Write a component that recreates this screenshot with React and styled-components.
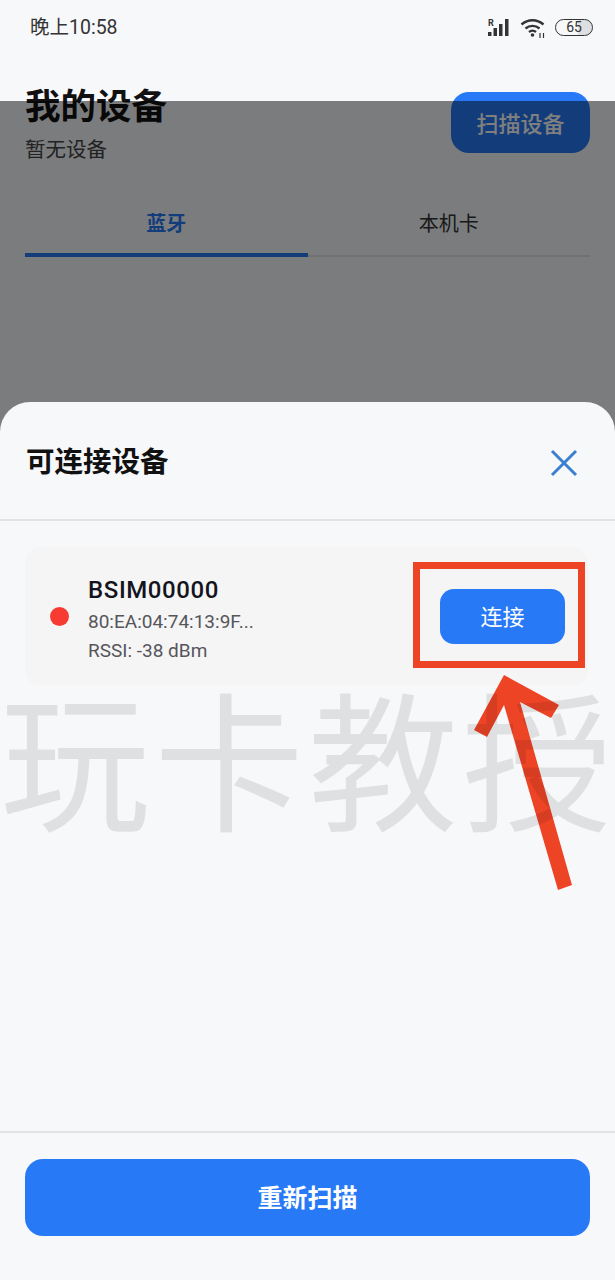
import React from "react";
import styled, { createGlobalStyle } from "styled-components";

const GlobalStyle = createGlobalStyle`
  html, body {
    margin: 0;
    padding: 0;
    background: #f7f8fa;
    font-family: Roboto, "Noto Sans CJK SC", sans-serif;
  }
  * { box-sizing: border-box; }
`;

const Page = styled.div`
  position: relative;
  width: 615px;
  height: 1280px;
  overflow: hidden;
  background: #f7f8fa;
`;

const StatusBar = styled.div`
  display: flex;
  align-items: center;
  justify-content: space-between;
  height: 55px;
  padding: 0 22px 0 30px;
`;

const Time = styled.span`
  margin-bottom: 4px;
  font-size: 19.5px;
  color: #333;
`;

const StatusIcons = styled.div`
  display: flex;
  align-items: center;
  gap: 8px;
`;

const Battery = styled.div`
  width: 38px;
  height: 17px;
  border: 1.5px solid #333;
  border-radius: 9px;
  font-size: 14px;
  line-height: 14px;
  text-align: center;
  color: #333;
  background: linear-gradient(90deg, #f7f8fa 62%, #dedfe1 62%);
`;

const Header = styled.div`
  display: flex;
  align-items: flex-start;
  justify-content: space-between;
  padding: 27px 25px 0;
`;

const HeaderText = styled.div`
  display: flex;
  flex-direction: column;
`;

const PageTitle = styled.h1`
  margin: 0;
  font-size: 35.5px;
  line-height: 50px;
  font-weight: 700;
  color: #111;
`;

const Subtitle = styled.div`
  padding-top: 1px;
  font-size: 20.5px;
  line-height: 35px;
  color: #444;
`;

const ScanButton = styled.button`
  width: 139px;
  height: 61px;
  margin-top: 10px;
  padding: 0 0 2px;
  border: none;
  border-radius: 18px;
  background: #2779f6;
  color: #fff;
  font: 500 22px "Noto Sans CJK SC", sans-serif;
`;

const Tabs = styled.div`
  display: flex;
  margin: 30px 25px 0;
  border-bottom: 2px solid #e2e3e5;
`;

const Tab = styled.div`
  flex: 1;
  height: 59px;
  padding-top: 11px;
  margin-bottom: -2px;
  text-align: center;
  font-size: 20px;
  line-height: 30px;
  font-weight: ${(p) => (p.$active ? 600 : 400)};
  color: ${(p) => (p.$active ? "#2779f6" : "#333")};
  border-bottom: 4px solid ${(p) => (p.$active ? "#2779f6" : "transparent")};
`;

const Overlay = styled.div`
  position: absolute;
  top: 101px;
  left: 0;
  right: 0;
  bottom: 0;
  background: rgba(0, 0, 0, 0.5);
`;

const Sheet = styled.div`
  position: absolute;
  top: 402px;
  left: 0;
  right: 0;
  bottom: 0;
  display: flex;
  flex-direction: column;
  background: #f7f8fa;
  border-radius: 30px 30px 0 0;
`;

const SheetHeader = styled.div`
  display: flex;
  align-items: center;
  justify-content: space-between;
  height: 119px;
  padding: 0 37px 0 26px;
  border-bottom: 2px solid #e3e4e6;
`;

const SheetTitle = styled.h2`
  margin: 0 0 2px;
  font-size: 28.5px;
  font-weight: 600;
  color: #111;
`;

const CloseIcon = styled.svg`
  width: 28px;
  height: 28px;
  margin-top: 4px;
`;

const SheetBody = styled.div`
  flex: 1;
  padding: 26px 27px 0 25px;
`;

const DeviceCard = styled.div`
  display: flex;
  align-items: center;
  height: 139px;
  padding: 0 23px 0 25px;
  border-radius: 16px;
  background: #f5f5f6;
`;

const StatusDot = styled.span`
  flex: none;
  width: 19px;
  height: 19px;
  margin-right: 19px;
  border-radius: 50%;
  background: #f73b33;
`;

const DeviceInfo = styled.div`
  flex: 1;
  display: flex;
  flex-direction: column;
  padding-top: 7px;
`;

const DeviceName = styled.div`
  margin-bottom: 2px;
  font-size: 24px;
  line-height: 30px;
  font-weight: 500;
  letter-spacing: 0.6px;
  color: #141420;
`;

const DeviceMeta = styled.div`
  font-size: 19px;
  line-height: 29px;
  color: #55565c;
`;

const ConnectButton = styled.button`
  width: 125px;
  height: 55px;
  padding: 0 0 3px;
  border: none;
  border-radius: 14px;
  background: #2779f6;
  color: #fff;
  font: 400 22px "Noto Sans CJK SC", sans-serif;
`;

const SheetFooter = styled.div`
  padding: 26px 25px 44px;
  border-top: 2px solid #e3e4e6;
`;

const RescanButton = styled.button`
  display: block;
  width: 100%;
  height: 77px;
  padding: 0 0 4px;
  border: none;
  border-radius: 18px;
  background: #2779f6;
  color: #fff;
  font: 600 25px "Noto Sans CJK SC", sans-serif;
`;

const ArrowMark = styled.svg`
  position: absolute;
  top: 670px;
  left: 465px;
  width: 115px;
  height: 225px;
`;

const RedBox = styled.div`
  position: absolute;
  top: 562px;
  left: 413px;
  width: 172px;
  height: 106px;
  border: 7px solid #ee4426;
`;

const Watermark = styled.div`
  position: absolute;
  top: 690px;
  left: 0;
  font: 400 150px/130px "Noto Sans CJK SC", sans-serif;
  letter-spacing: 4px;
  white-space: nowrap;
  color: rgba(0, 0, 0, 0.095);
`;

const SignalIcon = () => (
  <svg width="24" height="18" viewBox="0 0 24 18">
    <text x="0" y="7" fontSize="9" fontWeight="700" fontFamily="Roboto" fill="#333">R</text>
    <rect x="0" y="13" width="3.5" height="4" fill="#333" />
    <rect x="5.5" y="9" width="3.5" height="8" fill="#333" />
    <rect x="11" y="5" width="3.5" height="12" fill="#333" />
    <rect x="17" y="0" width="3.5" height="17" fill="#333" />
  </svg>
);

const WifiIcon = () => (
  <svg width="27" height="20" viewBox="0 0 27 20" fill="none" stroke="#333" strokeWidth="2.4">
    <path d="M1.5 6.5C8 .8 17 .8 23.5 6.5" />
    <path d="M5.5 10.5C9.5 7 15.5 7 19.5 10.5" />
    <path d="M9 14C11.3 12.2 13.7 12.2 16 14" />
    <circle cx="12.5" cy="17" r="1.8" fill="#333" stroke="none" />
    <path d="M20 15v5M23.5 15v5" strokeWidth="1.2" />
  </svg>
);

export default function App() {
  return (
    <Page>
      <GlobalStyle />
      <StatusBar>
        <Time>晚上10:58</Time>
        <StatusIcons>
          <SignalIcon />
          <WifiIcon />
          <Battery>65</Battery>
        </StatusIcons>
      </StatusBar>
      <Header>
        <HeaderText>
          <PageTitle>我的设备</PageTitle>
          <Subtitle>暂无设备</Subtitle>
        </HeaderText>
        <ScanButton>扫描设备</ScanButton>
      </Header>
      <Tabs>
        <Tab $active>蓝牙</Tab>
        <Tab>本机卡</Tab>
      </Tabs>
      <Overlay />
      <Sheet>
        <SheetHeader>
          <SheetTitle>可连接设备</SheetTitle>
          <CloseIcon viewBox="0 0 28 28" fill="none" stroke="#3b7fd0" strokeWidth="3">
            <path d="M2 2L26 26M26 2L2 26" />
          </CloseIcon>
        </SheetHeader>
        <SheetBody>
          <DeviceCard>
            <StatusDot />
            <DeviceInfo>
              <DeviceName>BSIM00000</DeviceName>
              <DeviceMeta>80:EA:04:74:13:9F...</DeviceMeta>
              <DeviceMeta>RSSI: -38 dBm</DeviceMeta>
            </DeviceInfo>
            <ConnectButton>连接</ConnectButton>
          </DeviceCard>
        </SheetBody>
        <SheetFooter>
          <RescanButton>重新扫描</RescanButton>
        </SheetFooter>
      </Sheet>
      <RedBox />
      <ArrowMark viewBox="465 670 115 225">
        <polygon
          fill="#ee4426"
          points="504,675 559,705 551,718 520,702 572,885 558,890 504,705 487,737 474,730"
        />
      </ArrowMark>
      <Watermark>玩卡教授</Watermark>
    </Page>
  );
}
